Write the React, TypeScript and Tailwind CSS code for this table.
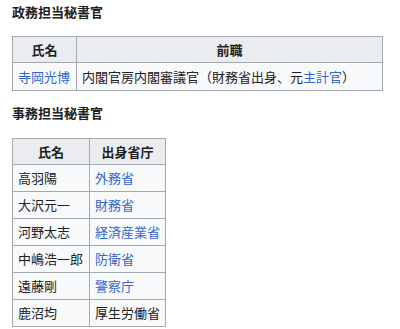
import React from "react";

const font = { fontFamily: '"Noto Sans CJK JP", "Noto Sans", sans-serif' };

type Cell = { text: string; link?: boolean; parts?: { text: string; link?: boolean }[] };

function CellText({ cell }: { cell: Cell }) {
  if (cell.parts) {
    return (
      <>
        {cell.parts.map((p, i) => (
          <span key={i} className={p.link ? "text-[#3366cc]" : ""}>
            {p.text}
          </span>
        ))}
      </>
    );
  }
  return <span className={cell.link ? "text-[#3366cc]" : ""}>{cell.text}</span>;
}

const staff: [Cell, Cell][] = [
  [{ text: "高羽陽" }, { text: "外務省", link: true }],
  [{ text: "大沢元一" }, { text: "財務省", link: true }],
  [{ text: "河野太志" }, { text: "経済産業省", link: true }],
  [{ text: "中嶋浩一郎" }, { text: "防衛省", link: true }],
  [{ text: "遠藤剛" }, { text: "警察庁", link: true }],
  [{ text: "鹿沼均" }, { text: "厚生労働省" }],
];

export default function App() {
  return (
    <div className="w-[400px] h-[329px] bg-white text-[#202122] pl-[12px] overflow-hidden" style={font}>
      <h3 className="mt-[2px] text-[13px] leading-[20px] font-bold">政務担当秘書官</h3>

      <div className="mt-[14px] w-[371px] border-l border-t border-[#a2a9b1] text-[13px]">
        <div className="flex bg-[#eaecf0] font-bold">
          <div className="w-[64px] h-[26px] border-r border-b border-[#a2a9b1] flex items-center justify-center">氏名</div>
          <div className="w-[306px] h-[26px] border-r border-b border-[#a2a9b1] flex items-center justify-center">前職</div>
        </div>
        <div className="flex bg-[#f8f9fa]">
          <div className="w-[64px] h-[28px] border-r border-b border-[#a2a9b1] flex items-center pl-[5px] whitespace-nowrap">
            <span className="text-[#3366cc]">寺岡光博</span>
          </div>
          <div className="w-[306px] h-[28px] border-r border-b border-[#a2a9b1] flex items-center pl-[5px] whitespace-nowrap">
            <CellText
              cell={{
                text: "",
                parts: [
                  { text: "内閣官房内閣審議官（財務省出身、元" },
                  { text: "主計官", link: true },
                  { text: "）" },
                ],
              }}
            />
          </div>
        </div>
      </div>

      <h3 className="mt-[12px] text-[13px] leading-[20px] font-bold">事務担当秘書官</h3>

      <div className="mt-[15px] w-[154px] border-l border-t border-[#a2a9b1] text-[13px]">
        <div className="flex bg-[#eaecf0] font-bold">
          <div className="w-[77px] h-[26px] border-r border-b border-[#a2a9b1] flex items-center justify-center">氏名</div>
          <div className="w-[76px] h-[26px] border-r border-b border-[#a2a9b1] flex items-center justify-center">出身省庁</div>
        </div>
        {staff.map(([name, office], i) => (
          <div key={i} className="flex bg-[#f8f9fa]">
            <div className="w-[77px] h-[27px] border-r border-b border-[#a2a9b1] flex items-center pl-[5px] whitespace-nowrap">
              <CellText cell={name} />
            </div>
            <div className="w-[76px] h-[27px] border-r border-b border-[#a2a9b1] flex items-center pl-[5px] whitespace-nowrap">
              <CellText cell={office} />
            </div>
          </div>
        ))}
      </div>
    </div>
  );
}
